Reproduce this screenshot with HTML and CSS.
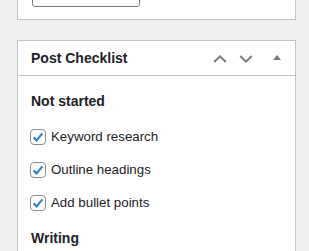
FILE: index.html
```html
<!DOCTYPE html>
<html>
<head>
<meta charset="utf-8">
<link rel="stylesheet" href="styles.css">
</head>
<body>
<div class="wrap">
  <div class="box box-top">
    <div class="btn"></div>
  </div>
  <div class="box">
    <div class="header">
      <h2 class="title">Post Checklist</h2>
      <button class="hbtn" aria-label="Move up">
        <svg width="14" height="8" viewBox="0 0 14 8"><path d="M1.2 7 L7 1.4 L12.8 7" fill="none" stroke="#787c82" stroke-width="1.9"/></svg>
      </button>
      <button class="hbtn" aria-label="Move down">
        <svg width="14" height="8" viewBox="0 0 14 8"><path d="M1.2 1 L7 6.6 L12.8 1" fill="none" stroke="#787c82" stroke-width="1.9"/></svg>
      </button>
      <button class="hbtn toggle" aria-label="Toggle panel">
        <svg width="8" height="5" viewBox="0 0 8 5"><path d="M0 5 L4 0 L8 5 Z" fill="#787c82"/></svg>
      </button>
    </div>
    <div class="content">
      <h3 class="section">Not started</h3>
      <label class="item"><span class="cb"><svg width="14" height="14" viewBox="0 0 14 14"><path d="M2.6 7.4 L5.6 10.4 L11.4 3.4" fill="none" stroke="#3582c4" stroke-width="2.2"/></svg></span>Keyword research</label>
      <label class="item"><span class="cb"><svg width="14" height="14" viewBox="0 0 14 14"><path d="M2.6 7.4 L5.6 10.4 L11.4 3.4" fill="none" stroke="#3582c4" stroke-width="2.2"/></svg></span>Outline headings</label>
      <label class="item"><span class="cb"><svg width="14" height="14" viewBox="0 0 14 14"><path d="M2.6 7.4 L5.6 10.4 L11.4 3.4" fill="none" stroke="#3582c4" stroke-width="2.2"/></svg></span>Add bullet points</label>
      <h3 class="section writing">Writing</h3>
    </div>
  </div>
</div>
</body>
</html>
```
FILE: styles.css
```css
html, body {
  margin: 0;
  padding: 0;
  background: #f0f0f1;
  font-family: "Liberation Sans", Arial, sans-serif;
  color: #1d2327;
  overflow: hidden;
  height: 251px;
}
.wrap {
  padding: 0 13px 0 17px;
}
.box {
  background: #fff;
  border: 1px solid #c3c4c7;
}
.box-top {
  border-top: none;
  height: 19px;
  overflow: hidden;
  margin-bottom: 20px;
  padding-left: 14px;
}
.btn {
  width: 106px;
  height: 30px;
  margin-top: -25px;
  border: 1px solid #787c82;
  border-radius: 3px;
  background: #fff;
}
.header {
  display: flex;
  align-items: center;
  height: 34px;
  border-bottom: 1px solid #c3c4c7;
}
.title {
  flex: 1;
  margin: 0;
  padding-left: 13px;
  font-size: 14px;
  font-weight: 600;
  line-height: 20px;
}
.hbtn {
  width: 26px;
  height: 34px;
  padding: 0;
  margin: 0;
  border: none;
  background: none;
  display: flex;
  align-items: center;
  justify-content: center;
  padding-top: 2px;
}
.toggle {
  width: 36px;
  padding-top: 0;
  padding-bottom: 2px;
}
.content {
  padding: 0 12px;
}
.section {
  margin: 15px 0 9px 1px;
  font-size: 14px;
  font-weight: 600;
  line-height: 20px;
}
.writing {
  margin-top: 9px;
}
.item {
  display: flex;
  align-items: center;
  height: 33px;
  font-size: 13.3px;
  gap: 5px;
}
.cb {
  box-sizing: border-box;
  width: 16px;
  height: 16px;
  border: 1px solid #8c8f94;
  border-radius: 4px;
  display: flex;
  align-items: center;
  justify-content: center;
  background: #fff;
}
```
